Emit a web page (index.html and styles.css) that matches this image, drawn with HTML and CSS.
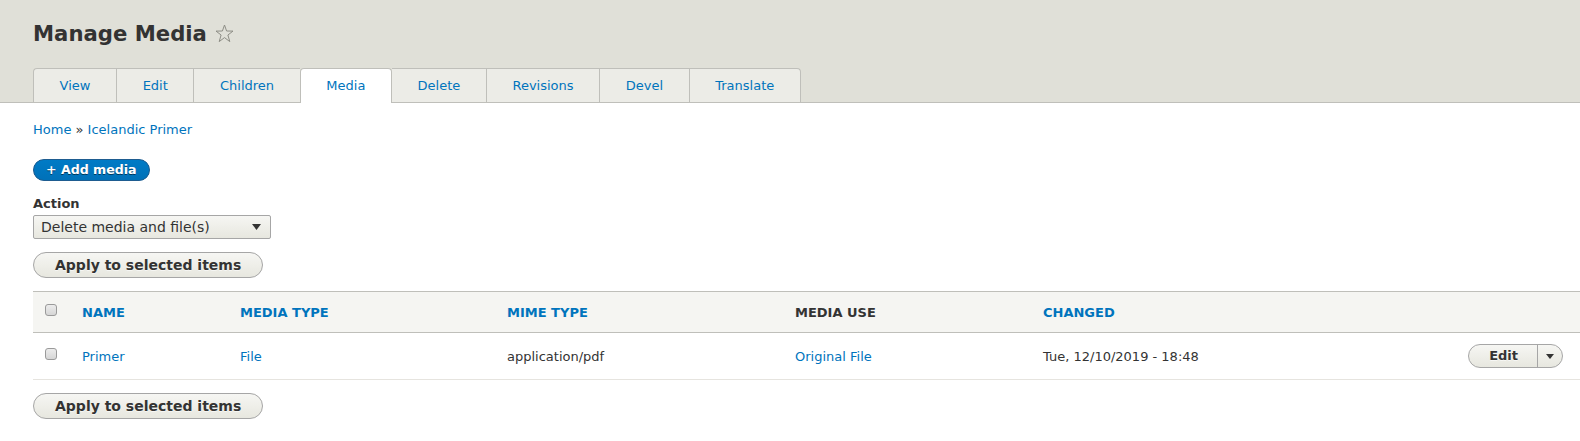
FILE: index.html
```html
<!DOCTYPE html>
<html lang="en">
<head>
<meta charset="utf-8">
<title>Manage Media</title>
<link rel="stylesheet" href="styles.css">
</head>
<body>
<header class="page-header">
  <div class="title-row">
    <h1 class="page-title">Manage Media</h1>
    <svg class="star" width="19" height="19" viewBox="0 0 19 19"><polygon points="9.5,1 11.6,7 18,7.1 12.9,11 14.8,17.6 9.5,13.6 4.2,17.6 6.1,11 1,7.1 7.4,7" fill="none" stroke="#8e8e86" stroke-width="1" stroke-linejoin="miter"/></svg>
  </div>
  <nav>
    <ul class="tabs">
      <li class="tab first"><a href="#">View</a></li>
      <li class="tab"><a href="#">Edit</a></li>
      <li class="tab"><a href="#">Children</a></li>
      <li class="tab active"><a href="#">Media</a></li>
      <li class="tab"><a href="#">Delete</a></li>
      <li class="tab"><a href="#">Revisions</a></li>
      <li class="tab"><a href="#">Devel</a></li>
      <li class="tab last"><a href="#">Translate</a></li>
    </ul>
  </nav>
</header>
<main class="content">
  <div class="breadcrumb"><a href="#">Home</a> » <a href="#">Icelandic Primer</a></div>
  <div class="actions"><a class="button-primary" href="#">+ Add media</a></div>
  <div class="form-item">
    <label class="form-label">Action</label>
    <div class="select"><span>Delete media and file(s)</span><svg class="select-arrow" width="9" height="6" viewBox="0 0 9 6"><polygon points="0,0 9,0 4.5,6" fill="#333"/></svg></div>
  </div>
  <div class="form-actions"><button class="button">Apply to selected items</button></div>
  <table class="media-table">
    <colgroup>
      <col class="c-select"><col class="c-name"><col class="c-type"><col class="c-mime"><col class="c-use"><col class="c-changed"><col class="c-ops">
    </colgroup>
    <thead>
      <tr>
        <th><input type="checkbox" class="check"></th>
        <th><a href="#">Name</a></th>
        <th><a href="#">Media type</a></th>
        <th><a href="#">MIME type</a></th>
        <th>Media use</th>
        <th><a href="#">Changed</a></th>
        <th></th>
      </tr>
    </thead>
    <tbody>
      <tr>
        <td><input type="checkbox" class="check"></td>
        <td><a href="#">Primer</a></td>
        <td><a href="#">File</a></td>
        <td>application/pdf</td>
        <td><a href="#">Original File</a></td>
        <td>Tue, 12/10/2019 - 18:48</td>
        <td class="ops">
          <div class="dropbutton"><a class="drop-main" href="#">Edit</a><span class="drop-toggle"><svg width="8" height="5" viewBox="0 0 8 5"><polygon points="0,0 8,0 4,5" fill="#333"/></svg></span></div>
        </td>
      </tr>
    </tbody>
  </table>
  <div class="form-actions bottom"><button class="button">Apply to selected items</button></div>
</main>
</body>
</html>
```
FILE: styles.css
```css
* { box-sizing: border-box; }
html, body { margin: 0; padding: 0; }
body {
  font-family: "DejaVu Sans", "Liberation Sans", sans-serif;
  font-size: 13px;
  color: #333;
  background: #fff;
}
a { color: #0074bd; text-decoration: none; }

.page-header {
  background: #e0e0d8;
  border-bottom: 1px solid #bfbfba;
  height: 103px;
  padding: 21px 0 0 33px;
}
.title-row {
  display: flex;
  align-items: center;
  height: 26px;
  gap: 8px;
}
.page-title {
  margin: 0;
  font-size: 21.2px;
  line-height: 26px;
  font-weight: bold;
  color: #333;
}
.star { display: block; margin-top: -1px; }

.tabs {
  display: flex;
  list-style: none;
  margin: 21px 0 0 0;
  padding: 0;
}
.tab a {
  display: block;
  height: 34px;
  line-height: 33px;
  padding: 0 25.6px;
  background: #ecece7;
  border: 1px solid #bfbfba;
  border-right: none;
  border-bottom: none;
  color: #0074bd;
}
.tab.first a { border-top-left-radius: 4px; }
.tab.last a { border-right: 1px solid #bfbfba; border-top-right-radius: 4px; }
.tab.active a {
  background: #fff;
  height: 35px;
  border-right: 1px solid #bfbfba;
  border-radius: 4px 4px 0 0;
}
.tab.active + .tab a { border-left: none; }

.content { padding: 17px 0 0 33px; }
.breadcrumb { line-height: 20px; height: 20px; color: #333; }

.actions { margin-top: 19px; height: 22px; }
.button-primary {
  display: inline-block;
  height: 22px;
  line-height: 20px;
  padding: 0 12px;
  font-size: 12.6px;
  font-weight: bold;
  color: #fff;
  background-color: #0071b8;
  background-image: linear-gradient(to bottom, #007bc6, #0071b8);
  border: 1px solid #1e5c90;
  border-radius: 20em;
  text-shadow: 0 1px rgba(0,0,0,0.5);
}

.form-item { margin-top: 14px; }
.form-label {
  display: block;
  font-weight: bold;
  line-height: 18px;
  color: #333;
}
.select {
  margin-top: 2px;
  width: 238px;
  height: 24px;
  display: flex;
  align-items: center;
  justify-content: space-between;
  padding: 0 7px 0 7px;
  font-size: 14px;
  color: #333;
  border: 1px solid #a6a6a6;
  border-radius: 2px;
  background: linear-gradient(to bottom, #f6f6f3, #e7e7df);
}
.select-arrow { display: block; margin-right: 2px; }

.form-actions { margin-top: 13px; }
.button {
  height: 26px;
  padding: 0 21px;
  font-family: "DejaVu Sans", "Liberation Sans", sans-serif;
  font-size: 14px;
  font-weight: bold;
  color: #333;
  background-color: #f2f1eb;
  background-image: linear-gradient(to bottom, #f6f6f3, #e7e7df);
  border: 1px solid #a6a6a6;
  border-radius: 20em;
  text-shadow: 0 1px rgba(255,255,255,0.6);
}
.form-actions.bottom { margin-top: 13px; }

.media-table {
  margin-top: 13px;
  width: 100%;
  table-layout: fixed;
  border-collapse: separate;
  border-spacing: 0;
}
.c-select { width: 37px; }
.c-name { width: 158px; }
.c-type { width: 267px; }
.c-mime { width: 288px; }
.c-use { width: 248px; }
.c-changed { width: 369px; }
.c-ops { width: auto; }

.media-table th {
  height: 42px;
  padding: 0 12px;
  text-align: left;
  text-transform: uppercase;
  font-weight: bold;
  color: #333;
  background: #f5f5f2;
  border-top: 1px solid #bfbfba;
  border-bottom: 1px solid #bfbfba;
  white-space: nowrap;
}
.media-table td {
  height: 47px;
  padding: 0 12px;
  border-bottom: 1px solid #e6e4df;
  white-space: nowrap;
}
.check {
  -webkit-appearance: none;
  appearance: none;
  display: inline-block;
  width: 12px;
  height: 12px;
  margin: 0 0 4px 0;
  vertical-align: middle;
  border: 1px solid #9a9a9a;
  border-radius: 3px;
  background: linear-gradient(to bottom, #ececec, #d6d6d6);
}
.media-table td.ops { text-align: right; padding-right: 17px; }
.dropbutton {
  display: inline-flex;
  height: 24px;
  border: 1px solid #a6a6a6;
  border-radius: 20em;
  background-image: linear-gradient(to bottom, #f6f6f3, #e7e7df);
  vertical-align: middle;
}
.drop-main {
  display: block;
  line-height: 22px;
  padding: 0 19px 0 20px;
  font-weight: bold;
  color: #333;
  text-shadow: 0 1px rgba(255,255,255,0.6);
}
.drop-toggle {
  display: flex;
  align-items: center;
  justify-content: center;
  width: 25px;
  border-left: 1px solid #a6a6a6;
  padding-right: 1px;
}
.drop-toggle svg { display: block; }
```
